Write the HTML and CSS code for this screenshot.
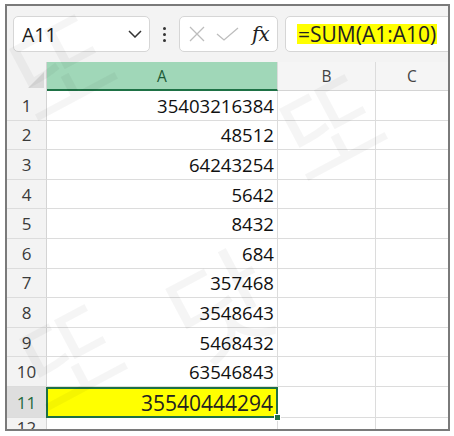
FILE: index.html
```html
<!DOCTYPE html>
<html lang="ko">
<head>
    <meta charset="UTF-8">
    <title>SUM</title>
    <link rel="stylesheet" href="styles.css">
</head>
<body>
    <div class="frame">
        <div class="toolbar">
            <div class="name-box">
                <span class="name-text">A11</span>
                <svg class="chevron" width="14" height="8" viewBox="0 0 14 8"><path d="M1 1 L7 7 L13 1" fill="none" stroke="#333" stroke-width="1.5"/></svg>
            </div>
            <div class="dots"><i></i><i></i><i></i></div>
            <div class="fx-box">
                <svg width="16" height="16" viewBox="0 0 16 16"><path d="M1 1 L15 15 M15 1 L1 15" stroke="#bdbdbd" stroke-width="1.3"/></svg>
                <svg width="23" height="14" viewBox="0 0 23 14"><path d="M1 7 L8 13 L22 1" fill="none" stroke="#bdbdbd" stroke-width="1.3"/></svg>
                <span class="fx">fx</span>
            </div>
            <div class="formula">
                <span class="formula-text">=SUM(A1:A10)</span>
            </div>
        </div>

        <div class="sheet">
            <div class="corner"><span class="corner-tri"></span></div>
            <div class="col-head active">A</div>
            <div class="col-head">B</div>
            <div class="col-head last">C</div>

            <div class="row-head">1</div><div class="cell num">35403216384</div><div class="cell"></div><div class="cell last"></div>
            <div class="row-head">2</div><div class="cell num">48512</div><div class="cell"></div><div class="cell last"></div>
            <div class="row-head">3</div><div class="cell num">64243254</div><div class="cell"></div><div class="cell last"></div>
            <div class="row-head">4</div><div class="cell num">5642</div><div class="cell"></div><div class="cell last"></div>
            <div class="row-head">5</div><div class="cell num">8432</div><div class="cell"></div><div class="cell last"></div>
            <div class="row-head">6</div><div class="cell num">684</div><div class="cell"></div><div class="cell last"></div>
            <div class="row-head">7</div><div class="cell num">357468</div><div class="cell"></div><div class="cell last"></div>
            <div class="row-head">8</div><div class="cell num">3548643</div><div class="cell"></div><div class="cell last"></div>
            <div class="row-head">9</div><div class="cell num">5468432</div><div class="cell"></div><div class="cell last"></div>
            <div class="row-head">10</div><div class="cell num">63546843</div><div class="cell"></div><div class="cell last"></div>
            <div class="row-head selected">11</div><div class="cell num total">35540444294<span class="handle"></span></div><div class="cell"></div><div class="cell last"></div>
            <div class="row-head">12</div><div class="cell"></div><div class="cell"></div><div class="cell last"></div>
        </div>

        <div class="watermark w1">또</div>
        <div class="watermark w2">또</div>
        <div class="watermark w3">닷</div>
        <div class="watermark w4">또</div>
    </div>
</body>
</html>
```

FILE: styles.css
```css
* {
    margin: 0;
    padding: 0;
    box-sizing: border-box;
}

body {
    background: #ffffff;
    padding: 4px 0 0 5px;
    font-family: 'Open Sans', 'Noto Sans', 'Noto Sans CJK KR', sans-serif;
    color: #222;
}

.frame {
    position: relative;
    width: 445px;
    height: 427px;
    border: 2px solid #7a7a7a;
    background: #f3f3f3;
    overflow: hidden;
}

.toolbar {
    display: flex;
    align-items: center;
    height: 56px;
    padding-left: 6px;
}

.name-box {
    width: 137px;
    height: 36px;
    background: #fff;
    border: 1px solid #d6d6d6;
    border-radius: 5px;
    display: flex;
    align-items: center;
    justify-content: space-between;
    padding: 0 7px 0 8px;
}

.name-text {
    font-size: 19.5px;
    color: #1a1a1a;
}

.dots {
    width: 29px;
    display: flex;
    flex-direction: column;
    align-items: center;
    gap: 3px;
}

.dots i {
    width: 3px;
    height: 3px;
    border-radius: 50%;
    background: #333;
}

.fx-box {
    width: 99px;
    height: 36px;
    background: #fff;
    border: 1px solid #d6d6d6;
    border-radius: 5px;
    display: flex;
    align-items: center;
    gap: 11px;
    padding-left: 9px;
}

.fx {
    font-family: 'DejaVu Serif', 'Liberation Serif', serif;
    font-style: italic;
    font-size: 20px;
    color: #222;
    margin-left: 2px;
    letter-spacing: -1px;
}

.formula {
    flex: 1;
    height: 36px;
    margin-left: 7px;
    margin-right: -6px;
    background: #fff;
    border: 1px solid #d6d6d6;
    border-radius: 5px;
    display: flex;
    align-items: center;
    padding-left: 11px;
}

.formula-text {
    background: #ffff00;
    font-size: 21px;
    line-height: 20px;
    padding: 0 1px;
    color: #222;
}

.sheet {
    display: grid;
    grid-template-columns: 40px 231px 98px 1fr;
    grid-template-rows: 29px repeat(10, 29.6px) 31.5px 20px;
    background: #fff;
}

.corner {
    background: #f3f3f3;
    border-right: 1px solid #d4d4d4;
    position: relative;
}

.corner-tri {
    position: absolute;
    right: 2px;
    bottom: 3px;
    width: 0;
    height: 0;
    border-left: 16px solid transparent;
    border-bottom: 16px solid #dadada;
}

.col-head {
    background: #f5f5f5;
    border-right: 1px solid #dcdcdc;
    border-bottom: 1px solid #d4d4d4;
    display: flex;
    align-items: center;
    justify-content: center;
    font-size: 15.5px;
    color: #444;
}

.col-head.active {
    background: #a0d7b8;
    border-bottom: 2px solid #1e7145;
    color: #1d5a37;
}

.col-head.last,
.cell.last {
    border-right: none;
}

.row-head {
    background: #f3f3f3;
    border-right: 1px solid #d4d4d4;
    border-bottom: 1px solid #dcdcdc;
    display: flex;
    align-items: center;
    justify-content: center;
    font-size: 17px;
    color: #3a3a3a;
}

.row-head.selected {
    background: #dedede;
    color: #1e6b40;
}

.cell {
    border-right: 1px solid #dcdcdc;
    border-bottom: 1px solid #dcdcdc;
}

.num {
    display: flex;
    align-items: center;
    justify-content: flex-end;
    padding-right: 3px;
    font-size: 18.6px;
    color: #111;
}

.total {
    position: relative;
    background: #ffff00;
    border: 2px solid #1e7145;
    margin-left: -1px;
    font-size: 21px;
    color: #222;
}

.handle {
    position: absolute;
    right: -5px;
    bottom: -5px;
    width: 7px;
    height: 7px;
    background: #1e7145;
    border: 1px solid #fff;
}

.watermark {
    position: absolute;
    font-family: 'Noto Sans CJK KR', sans-serif;
    font-size: 110px;
    line-height: 1;
    color: rgba(0, 0, 0, 0.04);
    transform: rotate(-28deg);
    pointer-events: none;
}

.w1 { left: 0; top: 0; }
.w2 { left: 270px; top: 60px; }
.w3 { left: 160px; top: 240px; }
.w4 { left: 10px; top: 290px; }
```
